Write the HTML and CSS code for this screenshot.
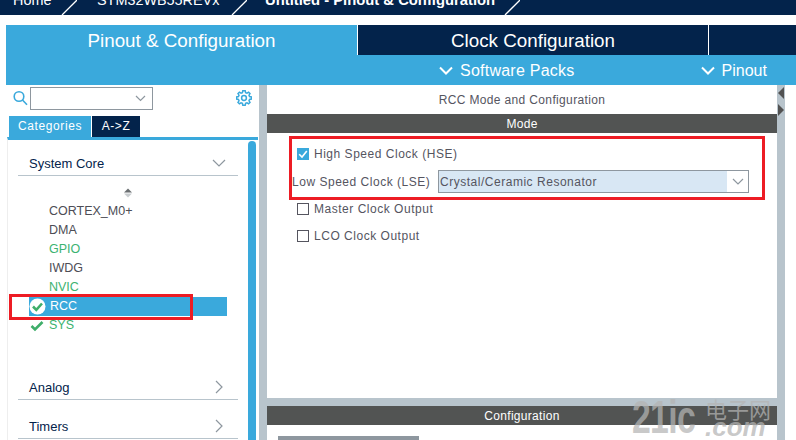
FILE: index.html
```html
<!DOCTYPE html>
<html lang="en">
<head>
    <meta charset="UTF-8">
    <title>RCC Mode and Configuration</title>
    <link rel="stylesheet" href="styles.css">
</head>
<body>
    <div class="crumbs">
        <span class="crumb crumb-home">Home</span>
        <svg class="slash" width="16" height="15"><path d="M1 15 L16 0" /></svg>
        <span class="crumb crumb-chip">STM32WB55REVx</span>
        <svg class="slash" width="16" height="15"><path d="M1 15 L16 0" /></svg>
        <span class="crumb crumb-file">Untitled - Pinout &amp; Configuration</span>
        <svg class="slash" width="16" height="15"><path d="M1 15 L16 0" /></svg>
    </div>

    <div class="tabs">
        <div class="tab tab-active">Pinout &amp; Configuration</div>
        <div class="tab">Clock Configuration</div>
        <div class="tab tab-empty"></div>
    </div>

    <div class="subbar">
        <div class="subitem sub-packs">
            <svg width="14" height="9" viewBox="0 0 14 9"><path d="M1 1.5 L7 7.5 L13 1.5" /></svg>
            <span>Software Packs</span>
        </div>
        <div class="subitem sub-pinout">
            <svg width="14" height="9" viewBox="0 0 14 9"><path d="M1 1.5 L7 7.5 L13 1.5" /></svg>
            <span>Pinout</span>
        </div>
    </div>

    <div class="main">
        <div class="left">
            <div class="search-row">
                <svg class="search-icon" width="15" height="16" viewBox="0 0 15 16">
                    <circle cx="6" cy="6.5" r="4.8" />
                    <path d="M9.5 10 L14 14.8" />
                </svg>
                <div class="search-box">
                    <svg width="11" height="7" viewBox="0 0 11 7"><path d="M1 1 L5.5 5.5 L10 1" /></svg>
                </div>
                <svg class="gear" width="16" height="16" viewBox="0 0 16 16">
                    <circle cx="8" cy="8" r="2.4" />
                    <path d="M6.8 0.8 H9.2 L9.6 2.6 L11 3.2 L12.6 2.2 L14 3.6 L13 5.2 L13.6 6.6 L15.4 7 V9 L13.6 9.4 L13 10.8 L14 12.4 L12.6 13.8 L11 12.8 L9.6 13.4 L9.2 15.2 H6.8 L6.4 13.4 L5 12.8 L3.4 13.8 L2 12.4 L3 10.8 L2.4 9.4 L0.6 9 V7 L2.4 6.6 L3 5.2 L2 3.6 L3.4 2.2 L5 3.2 L6.4 2.6 Z" />
                </svg>
            </div>
            <div class="cat-tabs">
                <div class="cat-tab cat-active">Categories</div>
                <div class="cat-tab">A-&gt;Z</div>
            </div>
            <div class="tree">
                <div class="tree-body">
                    <div class="group group-first">
                        <span>System Core</span>
                        <svg width="14" height="8" viewBox="0 0 14 8"><path d="M1 1 L7 7 L13 1" /></svg>
                    </div>
                    <svg class="sorter" width="10" height="10" viewBox="0 0 10 10">
                        <path class="sort-up" d="M1 4.5 L5 0.5 L9 4.5 Z" />
                        <path class="sort-down" d="M1 5.5 L5 9.5 L9 5.5 Z" />
                    </svg>
                    <div class="item"><span class="item-icon"></span>CORTEX_M0+</div>
                    <div class="item"><span class="item-icon"></span>DMA</div>
                    <div class="item item-ok"><span class="item-icon"></span>GPIO</div>
                    <div class="item"><span class="item-icon"></span>IWDG</div>
                    <div class="item item-ok"><span class="item-icon"></span>NVIC</div>
                    <div class="item item-selected">
                        <span class="item-icon">
                            <svg width="17" height="17" viewBox="0 0 17 17">
                                <circle class="tick-disc" cx="8.5" cy="8.5" r="8" />
                                <path class="tick" d="M4 8.5 L7.3 11.8 L13 5.5" />
                            </svg>
                        </span>RCC
                    </div>
                    <div class="item item-ok">
                        <span class="item-icon">
                            <svg width="14" height="12" viewBox="0 0 14 12"><path class="tick" d="M1.5 6 L5 9.5 L12.5 2" /></svg>
                        </span>SYS
                    </div>
                    <div class="group group-analog">
                        <span>Analog</span>
                        <svg width="8" height="14" viewBox="0 0 8 14"><path d="M1 1 L7 7 L1 13" /></svg>
                    </div>
                    <div class="group group-timers">
                        <span>Timers</span>
                        <svg width="8" height="14" viewBox="0 0 8 14"><path d="M1 1 L7 7 L1 13" /></svg>
                    </div>
                </div>
                <div class="tree-scroll"></div>
            </div>
        </div>

        <div class="splitter"></div>

        <div class="right">
            <div class="right-title">RCC Mode and Configuration</div>
            <div class="bar">Mode</div>
            <div class="mode-body">
                <div class="check-row">
                    <span class="checkbox checkbox-on">
                        <svg width="12" height="12" viewBox="0 0 12 12"><path d="M2.2 6.2 L5 9 L9.8 3" /></svg>
                    </span>
                    High Speed Clock (HSE)
                </div>
                <div class="select-row">
                    <label class="select-label">Low Speed Clock (LSE)</label>
                    <div class="select">
                        <span class="select-value">Crystal/Ceramic Resonator</span>
                        <span class="select-arrow">
                            <svg width="12" height="7" viewBox="0 0 12 7"><path d="M1 1 L6 6 L11 1" /></svg>
                        </span>
                    </div>
                </div>
                <div class="check-row"><span class="checkbox"></span>Master Clock Output</div>
                <div class="check-row"><span class="checkbox"></span>LCO Clock Output</div>
            </div>
            <div class="band"></div>
            <div class="bar">Configuration</div>
            <div class="config-body">
                <div class="config-tab"></div>
            </div>
        </div>

        <div class="side-rail">
            <svg width="8" height="35" viewBox="0 0 8 35">
                <path d="M7 2 L1 8 L7 14 Z" />
                <path d="M1 19 L7 25 L1 31 Z" />
            </svg>
        </div>
    </div>

    <!-- annotations drawn over the screenshot -->
    <div class="mark mark-rcc"></div>
    <div class="mark mark-mode"></div>

    <div class="watermark">
        <span class="wm-big">21ic</span>
        <span class="wm-side">
            <span class="wm-cn">电子网</span>
            <span class="wm-com">.com</span>
        </span>
    </div>
</body>
</html>
```

FILE: styles.css
```css
body {
    margin: 0;
    width: 796px;
    height: 440px;
    overflow: hidden;
    background-color: #fff;
    font-family: "Liberation Sans", Arial, sans-serif;
    position: relative;
}
svg {
    display: block;
    fill: none;
}

/* breadcrumb */
.crumbs {
    height: 15px;
    background-color: #03234b;
    display: flex;
    overflow: hidden;
    color: #fff;
    font-size: 14.4px;
}
.crumb {
    line-height: 16px;
    margin-top: -8px;
    white-space: nowrap;
}
.crumb-home {
    margin-left: 13px;
    width: 48px;
}
.crumb-chip {
    margin-left: 20px;
    width: 134px;
}
.crumb-file {
    margin-left: 18px;
    width: 239px;
    font-size: 14.8px;
    font-weight: bold;
}
.slash {
    flex-shrink: 0;
}
.slash path {
    stroke: #fff;
    stroke-width: 1.3;
}

/* main tabs */
.tabs {
    display: flex;
    margin-top: 10px;
    margin-left: 6px;
    height: 30px;
}
.tab {
    width: 350px;
    margin-right: 1px;
    background-color: #03234b;
    color: #fff;
    font-size: 18.8px;
    line-height: 31px;
    text-align: center;
}
.tab-active {
    width: 351px;
    background-color: #3aa9dc;
}
.tab-empty {
    width: 87px;
    margin-right: 0;
}
.subbar {
    height: 30px;
    margin-left: 6px;
    padding-top: 1px;
    box-sizing: border-box;
    background-color: #3aa9dc;
    color: #fff;
    font-size: 16px;
    letter-spacing: 0.24px;
    display: flex;
    align-items: center;
}
.subitem {
    display: flex;
    align-items: center;
    gap: 7px;
}
.subitem path {
    stroke: #fff;
    stroke-width: 2;
}
.sub-packs {
    margin-left: 433px;
}
.sub-pinout {
    margin-left: 126px;
    letter-spacing: 0;
}

/* layout */
.main {
    display: flex;
    height: 355px;
}
.left {
    width: 259px;
    flex-shrink: 0;
}
.splitter {
    width: 8px;
    background-color: #b8c4cc;
}
.right {
    width: 510px;
    flex-shrink: 0;
}
.side-rail {
    width: 8px;
    background-color: #b8c4cc;
}
.side-rail path {
    fill: #525252;
}

/* left panel */
.search-row {
    height: 31px;
    display: flex;
    align-items: flex-start;
}
.search-icon {
    margin: 5px 0 0 13px;
}
.search-icon circle, .search-icon path {
    stroke: #3aa9dc;
    stroke-width: 1.6;
}
.search-box {
    width: 115px;
    height: 21px;
    margin: 2px 83px 0 2px;
    padding-right: 6px;
    border: 1px solid #8e979f;
    display: flex;
    justify-content: flex-end;
    align-items: center;
}
.search-box path {
    stroke: #8e979f;
    stroke-width: 1.2;
}
.gear {
    margin-top: 5px;
}
.gear circle, .gear path {
    stroke: #3aa9dc;
    stroke-width: 1.5;
}
.cat-tabs {
    display: flex;
    height: 21px;
    margin-left: 9px;
    gap: 1px;
}
.cat-tab {
    background-color: #03234b;
    color: #fff;
    font-size: 12px;
    letter-spacing: 0.6px;
    line-height: 21px;
    width: 48px;
    text-align: center;
}
.cat-active {
    background-color: #3aa9dc;
    width: 82px;
}
.tree {
    display: flex;
    margin-left: 7px;
    margin-right: 1px;
    border-top: 3px solid #3aa9dc;
    border-left: 1px solid #eee;
    height: 301px;
    overflow: hidden;
}
.tree-body {
    width: 240px;
}
.tree-scroll {
    width: 8px;
    height: 320px;
    margin-top: 1px;
    background-color: #3aa9dc;
    border-radius: 4px 4px 0 0;
}
.group {
    margin-left: 10px;
    width: 220px;
    border-bottom: 1px solid #b8c4cc;
    padding-top: 16px;
    padding-bottom: 3px;
    padding-left: 11px;
    box-sizing: border-box;
    color: #03234b;
    font-size: 13px;
    line-height: 16px;
    display: flex;
    justify-content: space-between;
    align-items: center;
}
.group svg path {
    stroke: #8e979f;
    stroke-width: 1.2;
}
.group-first svg {
    margin-right: 12px;
    margin-top: -3px;
}
.group-analog {
    margin-top: 29px;
}
.group-analog svg, .group-timers svg {
    margin-right: 15px;
    margin-top: -3px;
}
.group-timers {
    padding-top: 19px;
}
.sorter {
    margin: 12px 0 4px 115px;
}
.sort-up {
    fill: #6b6f72;
}
.sort-down {
    fill: #c9cdd0;
}
.item {
    height: 19px;
    width: 198px;
    margin-left: 21px;
    display: flex;
    align-items: center;
    color: #4d4d55;
    font-size: 12.5px;
    line-height: 19px;
}
.item-icon {
    width: 20px;
    flex-shrink: 0;
    display: flex;
    align-items: center;
}
.item-ok {
    color: #3cb371;
}
.item-selected {
    background-color: #3aa9dc;
    color: #fff;
}
.item-selected .item-icon {
    width: 21px;
}
.tick-disc {
    fill: #fff;
}
.tick {
    stroke: #3fae6a;
    stroke-width: 2.6;
}
.item-ok .item-icon svg {
    margin-left: 1px;
}

/* right panel */
.right-title {
    height: 29px;
    line-height: 30px;
    text-align: center;
    color: #55555f;
    font-size: 12px;
    letter-spacing: 0.35px;
}
.bar {
    height: 19px;
    line-height: 20px;
    background-color: #525453;
    color: #fff;
    font-size: 12px;
    letter-spacing: 0.3px;
    text-align: center;
}
.mode-body {
    height: 265px;
    padding-top: 9px;
    box-sizing: border-box;
    color: #55555f;
    font-size: 12px;
    letter-spacing: 0.52px;
}
.check-row {
    height: 24px;
    padding-left: 30px;
    display: flex;
    align-items: center;
    margin-bottom: 3px;
}
.checkbox {
    width: 10px;
    height: 10px;
    border: 1px solid #55555f;
    margin-right: 5px;
}
.checkbox-on {
    background-color: #3aa9dc;
    border-color: #3aa9dc;
}
.checkbox-on svg {
    margin: -1px;
}
.checkbox-on path {
    stroke: #fff;
    stroke-width: 1.6;
}
.select-row {
    display: flex;
    align-items: center;
    height: 23px;
    margin-top: 4px;
    margin-bottom: 4px;
    padding-left: 25px;
}
.select-label {
    width: 146px;
    white-space: nowrap;
}
.select {
    width: 311px;
    height: 23px;
    box-sizing: border-box;
    border: 1px solid #8e979f;
    background-color: #d8e7f4;
    display: flex;
    justify-content: space-between;
    align-items: center;
}
.select-value {
    padding-left: 1px;
}
.select-arrow {
    width: 21px;
    height: 21px;
    background-color: #fff;
    display: flex;
    align-items: center;
    justify-content: center;
}
.select-arrow path {
    stroke: #8e979f;
    stroke-width: 1.2;
}
.band {
    height: 8px;
    background-color: #b8c4cc;
}
.config-body {
    padding: 11px 0 0 11px;
}
.config-tab {
    width: 141px;
    height: 10px;
    background-color: #8e979f;
}

/* red annotation boxes */
.mark {
    position: absolute;
    border: 3px solid #ed1c24;
    box-sizing: border-box;
}
.mark-rcc {
    left: 9px;
    top: 294px;
    width: 184px;
    height: 26px;
}
.mark-mode {
    left: 289px;
    top: 136px;
    width: 476px;
    height: 64px;
}

/* site watermark */
.watermark {
    position: absolute;
    left: 632px;
    top: 392px;
    display: flex;
    color: rgba(180, 180, 180, 0.73);
}
.wm-big {
    width: 73px;
    font-size: 47px;
    font-weight: bold;
    line-height: 50px;
    letter-spacing: -1px;
    transform: scaleX(0.72);
    transform-origin: left center;
}
.wm-side {
    display: flex;
    flex-direction: column;
    padding-top: 5px;
}
.wm-cn {
    font-family: "Noto Sans CJK SC", sans-serif;
    font-size: 22px;
    line-height: 22px;
}
.wm-com {
    font-size: 26px;
    font-weight: bold;
    font-style: italic;
    line-height: 16px;
}
```
